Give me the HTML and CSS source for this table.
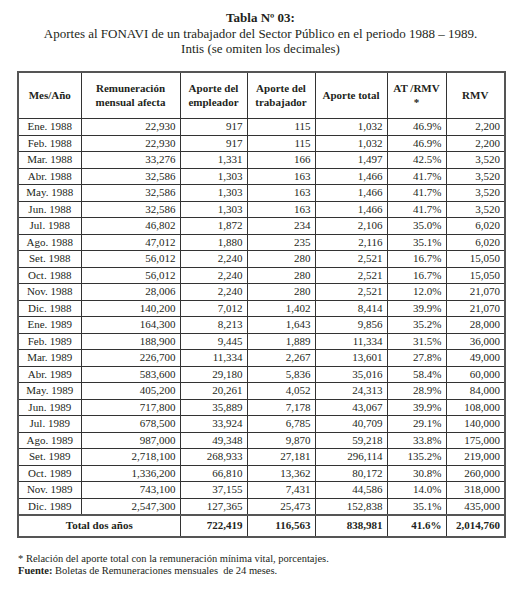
FILE: index.html
```html
<!DOCTYPE html>
<html lang="es">
<head>
<meta charset="utf-8">
<title>Tabla Nº 03</title>
<link rel="stylesheet" href="styles.css">
</head>
<body>
<div class="page">
  <div class="caption">
    <div class="title">Tabla Nº 03:</div>
    <div class="sub">Aportes al FONAVI de un trabajador del Sector Público en el periodo 1988 – 1989.</div>
    <div class="sub">Intis (se omiten los decimales)</div>
  </div>
  <table class="data">
    <colgroup>
      <col class="c1"><col class="c2"><col class="c3"><col class="c4"><col class="c5"><col class="c6"><col class="c7">
    </colgroup>
    <thead>
      <tr>
        <th>Mes/Año</th>
        <th>Remuneración<br>mensual afecta</th>
        <th>Aporte del<br>empleador</th>
        <th>Aporte del<br>trabajador</th>
        <th>Aporte total</th>
        <th class="atr">AT /RMV<br>*</th>
        <th>RMV</th>
      </tr>
    </thead>
    <tbody>
      <tr><td class="mes">Ene. 1988</td><td>22,930</td><td>917</td><td>115</td><td>1,032</td><td>46.9%</td><td>2,200</td></tr>
      <tr><td class="mes">Feb. 1988</td><td>22,930</td><td>917</td><td>115</td><td>1,032</td><td>46.9%</td><td>2,200</td></tr>
      <tr><td class="mes">Mar. 1988</td><td>33,276</td><td>1,331</td><td>166</td><td>1,497</td><td>42.5%</td><td>3,520</td></tr>
      <tr><td class="mes">Abr. 1988</td><td>32,586</td><td>1,303</td><td>163</td><td>1,466</td><td>41.7%</td><td>3,520</td></tr>
      <tr><td class="mes">May. 1988</td><td>32,586</td><td>1,303</td><td>163</td><td>1,466</td><td>41.7%</td><td>3,520</td></tr>
      <tr><td class="mes">Jun. 1988</td><td>32,586</td><td>1,303</td><td>163</td><td>1,466</td><td>41.7%</td><td>3,520</td></tr>
      <tr><td class="mes">Jul. 1988</td><td>46,802</td><td>1,872</td><td>234</td><td>2,106</td><td>35.0%</td><td>6,020</td></tr>
      <tr><td class="mes">Ago. 1988</td><td>47,012</td><td>1,880</td><td>235</td><td>2,116</td><td>35.1%</td><td>6,020</td></tr>
      <tr><td class="mes">Set. 1988</td><td>56,012</td><td>2,240</td><td>280</td><td>2,521</td><td>16.7%</td><td>15,050</td></tr>
      <tr><td class="mes">Oct. 1988</td><td>56,012</td><td>2,240</td><td>280</td><td>2,521</td><td>16.7%</td><td>15,050</td></tr>
      <tr><td class="mes">Nov. 1988</td><td>28,006</td><td>2,240</td><td>280</td><td>2,521</td><td>12.0%</td><td>21,070</td></tr>
      <tr><td class="mes">Dic. 1988</td><td>140,200</td><td>7,012</td><td>1,402</td><td>8,414</td><td>39.9%</td><td>21,070</td></tr>
      <tr><td class="mes">Ene. 1989</td><td>164,300</td><td>8,213</td><td>1,643</td><td>9,856</td><td>35.2%</td><td>28,000</td></tr>
      <tr><td class="mes">Feb. 1989</td><td>188,900</td><td>9,445</td><td>1,889</td><td>11,334</td><td>31.5%</td><td>36,000</td></tr>
      <tr><td class="mes">Mar. 1989</td><td>226,700</td><td>11,334</td><td>2,267</td><td>13,601</td><td>27.8%</td><td>49,000</td></tr>
      <tr><td class="mes">Abr. 1989</td><td>583,600</td><td>29,180</td><td>5,836</td><td>35,016</td><td>58.4%</td><td>60,000</td></tr>
      <tr><td class="mes">May. 1989</td><td>405,200</td><td>20,261</td><td>4,052</td><td>24,313</td><td>28.9%</td><td>84,000</td></tr>
      <tr><td class="mes">Jun. 1989</td><td>717,800</td><td>35,889</td><td>7,178</td><td>43,067</td><td>39.9%</td><td>108,000</td></tr>
      <tr><td class="mes">Jul. 1989</td><td>678,500</td><td>33,924</td><td>6,785</td><td>40,709</td><td>29.1%</td><td>140,000</td></tr>
      <tr><td class="mes">Ago. 1989</td><td>987,000</td><td>49,348</td><td>9,870</td><td>59,218</td><td>33.8%</td><td>175,000</td></tr>
      <tr><td class="mes">Set. 1989</td><td>2,718,100</td><td>268,933</td><td>27,181</td><td>296,114</td><td>135.2%</td><td>219,000</td></tr>
      <tr><td class="mes">Oct. 1989</td><td>1,336,200</td><td>66,810</td><td>13,362</td><td>80,172</td><td>30.8%</td><td>260,000</td></tr>
      <tr><td class="mes">Nov. 1989</td><td>743,100</td><td>37,155</td><td>7,431</td><td>44,586</td><td>14.0%</td><td>318,000</td></tr>
      <tr><td class="mes">Dic. 1989</td><td>2,547,300</td><td>127,365</td><td>25,473</td><td>152,838</td><td>35.1%</td><td>435,000</td></tr>
    </tbody>
    <tfoot>
      <tr><td class="tlabel" colspan="2">Total dos años</td><td>722,419</td><td>116,563</td><td>838,981</td><td>41.6%</td><td>2,014,760</td></tr>
    </tfoot>
  </table>
  <div class="notes">
    <p>* Relación del aporte total con la remuneración mínima vital, porcentajes.</p>
    <p><b>Fuente:</b> Boletas de Remuneraciones mensuales &nbsp;de 24 meses.</p>
  </div>
</div>
</body>
</html>
```
FILE: styles.css
```css
html, body {
  margin: 0;
  padding: 0;
  background: #ffffff;
}
body {
  font-family: "Liberation Serif", "Times New Roman", serif;
  color: #231f20;
}
.page {
  padding: 10px 18px 0 17px;
}
.caption {
  text-align: center;
  font-size: 13px;
  line-height: 15.5px;
  margin-bottom: 14px;
}
.title {
  font-weight: bold;
}
.data {
  border-collapse: collapse;
  width: 487px;
  border: 2px solid #555;
  font-size: 11px;
  font-family: "Liberation Serif", "Times New Roman", serif;
  table-layout: fixed;
}
.c1 { width: 63px; }
.c2 { width: 99px; }
.c3 { width: 67px; }
.c4 { width: 68px; }
.c5 { width: 72px; }
.c6 { width: 59px; }
.c7 { width: 59px; }
.data th, .data td {
  border: 1px solid #333;
  padding: 0 4px;
}
.data thead tr {
  height: 47px;
}
.data tbody tr {
  height: 16.5px;
}
.data tfoot tr {
  height: 22px;
}
.data th {
  font-weight: bold;
  text-align: center;
  line-height: 14px;
  vertical-align: middle;
}
.data td {
  line-height: 13px;
  text-align: right;
}
.data td.mes {
  text-align: center;
}
.data tfoot td {
  font-weight: bold;
  border-top: 2px solid #555;
}
.data tfoot td.tlabel {
  text-align: center;
}
.notes {
  margin-top: 15px;
  font-size: 10.5px;
  line-height: 12px;
}
.notes p {
  margin: 0;
  padding-left: 1px;
}
```
